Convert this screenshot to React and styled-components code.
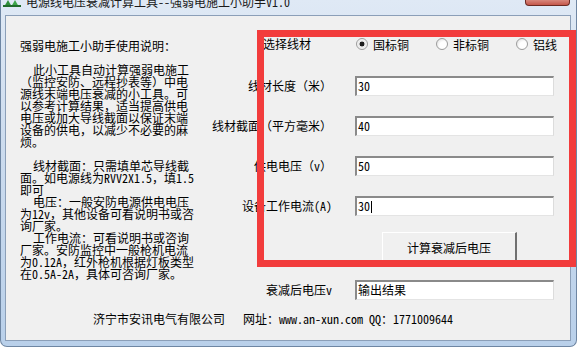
import React from 'react';
import styled, { createGlobalStyle } from 'styled-components';

const GlobalStyle = createGlobalStyle`
  html, body {
    margin: 0;
    padding: 0;
    background: #ffffff;
  }
  body {
    font-family: "Noto Sans Mono CJK SC", "Noto Sans CJK SC", sans-serif;
    font-size: 12px;
    color: #000;
  }
`;

const Window = styled.div`
  position: relative;
  width: 577px;
  height: 347px;
  box-sizing: border-box;
  display: flex;
  flex-direction: column;
  background: linear-gradient(180deg, #dfe9f5 0%, #cddcee 40%, #b9d0ea 100%);
  border: 1px solid #6e86a3;
  border-top: none;
  border-radius: 0 0 7px 7px;
`;

const TitleBar = styled.div`
  height: 15px;
  display: flex;
  align-items: flex-start;
  padding-left: 2px;
  overflow: hidden;
`;

const AppIcon = styled.svg`
  width: 18px;
  height: 7px;
  flex: none;
`;

const Title = styled.div`
  margin: -4px 0 0 5px;
  line-height: 12px;
  white-space: nowrap;
  color: #1a1a1a;
`;

const CloseButton = styled.div`
  margin-left: auto;
  margin-right: 6px;
  width: 45px;
  height: 6px;
  flex: none;
  box-sizing: border-box;
  border: 1px solid #6b2a22;
  border-top: none;
  border-radius: 0 0 4px 4px;
  background: linear-gradient(180deg, #d8877c 0%, #c4574a 100%);
`;

const Client = styled.div`
  margin: 0 5px 5px 4px;
  flex: 1;
  box-sizing: border-box;
  background: #f0f0f0;
  border: 1px solid #8b9fb8;
  padding: 18px 0 0 14px;
  display: flex;
  flex-direction: column;
`;

const Main = styled.div`
  display: flex;
`;

const Help = styled.div`
  width: 180px;
  flex: none;
  padding-top: 6px;
`;

const Line = styled.div`
  height: 12px;
  line-height: 12px;
  white-space: nowrap;
  padding-left: ${p => (p.$indent ? '13px' : '0')};
`;

const Form = styled.div`
  display: flex;
  flex-direction: column;
`;

const Row = styled.div`
  display: grid;
  grid-template-columns: 132px 199px;
  column-gap: 23px;
  align-items: center;
  margin-top: ${p => p.$top || 0}px;
  height: ${p => p.$h || 20}px;
`;

const Label = styled.div`
  text-align: ${p => (p.$left ? 'left' : 'right')};
  padding-left: ${p => (p.$left ? '63px' : '0')};
  white-space: nowrap;
  line-height: 12px;
`;

const Radios = styled.div`
  display: flex;
  white-space: nowrap;
`;

const RadioItem = styled.div`
  width: 80px;
  flex: none;
  display: flex;
  align-items: center;
  gap: 5px;
  padding-left: 1px;
  box-sizing: border-box;
`;

const RadioDot = styled.span`
  width: 12px;
  height: 12px;
  flex: none;
  box-sizing: border-box;
  border-radius: 50%;
  border: 1px solid #9c9c9c;
  background: ${p =>
    p.$checked
      ? 'radial-gradient(circle, #1c1c1c 0 2.2px, #e6e6e6 2.7px, #ffffff 100%)'
      : 'radial-gradient(circle at 65% 65%, #ffffff 0 40%, #d8d8d8 100%)'};
`;

const Field = styled.div`
  height: 20px;
  box-sizing: border-box;
  background: #ffffff;
  border-top: 2px solid #8a8a8a;
  border-left: 2px solid #8a8a8a;
  border-right: 1px solid #dcdcdc;
  border-bottom: 1px solid #e4e4e4;
  line-height: 16px;
  padding-left: 1px;
  white-space: nowrap;
`;

const Caret = styled.span`
  display: inline-block;
  width: 1px;
  height: 12px;
  margin-left: 1px;
  vertical-align: -2px;
  background: #000;
`;

const PushButton = styled.button`
  grid-column: 2;
  margin-left: 27px;
  width: 135px;
  height: 31px;
  box-sizing: border-box;
  background: #f0f0f0;
  border-top: 1px solid #ffffff;
  border-left: 1px solid #ffffff;
  border-right: 2px solid #707070;
  border-bottom: 2px solid #707070;
  font: inherit;
  color: #000;
  padding: 0;
`;

const Footer = styled.div`
  display: grid;
  grid-template-columns: 223px 1fr;
  margin-top: 13px;
  line-height: 12px;
  white-space: nowrap;
`;

const Company = styled.div`
  text-align: right;
  padding-right: 18px;
`;

const Site = styled.div``;

const Highlight = styled.div`
  position: absolute;
  left: 256px;
  top: 30px;
  width: 319px;
  height: 237px;
  box-sizing: border-box;
  border: 7px solid #f23c3c;
  pointer-events: none;
`;

const helpLines = [
  { t: '强弱电施工小助手使用说明：' },
  { t: '' },
  { t: '此小工具自动计算强弱电施工', i: true },
  { t: '（监控安防、远程抄表等）中电' },
  { t: '源线末端电压衰减的小工具。可' },
  { t: '以参考计算结果，适当提高供电' },
  { t: '电压或加大导线截面以保证末端' },
  { t: '设备的供电，以减少不必要的麻' },
  { t: '烦。' },
  { t: '' },
  { t: '线材截面：只需填单芯导线截', i: true },
  { t: '面。如电源线为RVV2X1.5，填1.5' },
  { t: '即可' },
  { t: '电压：一般安防电源供电电压', i: true },
  { t: '为12v，其他设备可看说明书或咨' },
  { t: '询厂家。' },
  { t: '工作电流：可看说明书或咨询', i: true },
  { t: '厂家。安防监控中一般枪机电流' },
  { t: '为0.12A，红外枪机根据灯板类型' },
  { t: '在0.5A-2A，具体可咨询厂家。' },
];

const inputs = [
  { label: '线材长度（米）', value: '30', top: 22 },
  { label: '线材截面（平方毫米）', value: '40', top: 20 },
  { label: '供电电压（v）', value: '50', top: 20 },
  { label: '设备工作电流(A)', value: '30', top: 20, caret: true },
];

const materials = [
  { name: '国标铜', checked: true },
  { name: '非标铜' },
  { name: '铝线' },
];

export default function App() {
  return (
    <>
      <GlobalStyle />
      <Window>
        <TitleBar>
          <AppIcon viewBox="0 0 18 7">
            <path d="M1 7 L5 0 L9 7 Z" fill="#2f8f3a" />
            <path d="M8 7 L12 0 L16 7 Z" fill="#3da64a" />
            <rect x="0" y="5" width="18" height="2" fill="#1f6b2a" />
          </AppIcon>
          <Title>电源线电压衰减计算工具--强弱电施工小助手V1.0</Title>
          <CloseButton />
        </TitleBar>
        <Client>
          <Main>
            <Help>
              {helpLines.map((l, n) => (
                <Line key={n} $indent={l.i}>{l.t}</Line>
              ))}
            </Help>
            <Form>
              <Row $h={20}>
                <Label $left>选择线材</Label>
                <Radios>
                  {materials.map(m => (
                    <RadioItem key={m.name}>
                      <RadioDot $checked={m.checked} />
                      {m.name}
                    </RadioItem>
                  ))}
                </Radios>
              </Row>
              {inputs.map(f => (
                <Row key={f.label} $top={f.top}>
                  <Label>{f.label}</Label>
                  <Field>
                    {f.value}
                    {f.caret && <Caret />}
                  </Field>
                </Row>
              ))}
              <Row $top={16} $h={31}>
                <PushButton>计算衰减后电压</PushButton>
              </Row>
              <Row $top={17}>
                <Label>衰减后电压v</Label>
                <Field>输出结果</Field>
              </Row>
            </Form>
          </Main>
          <Footer>
            <Company>济宁市安讯电气有限公司</Company>
            <Site>网址：www.an-xun.com QQ：1771009644</Site>
          </Footer>
        </Client>
        <Highlight />
      </Window>
    </>
  );
}
